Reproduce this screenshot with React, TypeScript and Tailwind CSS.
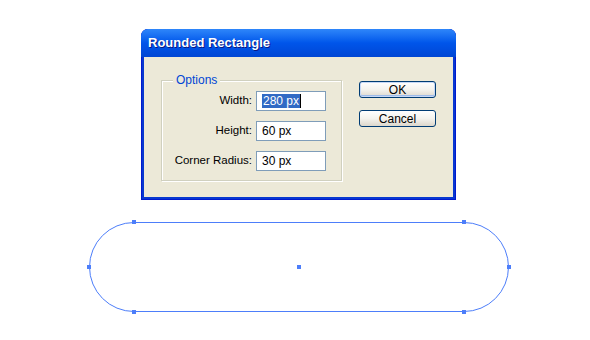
const font = "font-['Liberation_Sans',Arial,sans-serif]";

function Field({ label, value, selected }: { label: string; value: string; selected?: boolean }) {
  return (
    <div className="flex items-center justify-end gap-[4px] pr-[15px]">
      <span className="text-[11.5px] text-black">{label}</span>
      <div className="flex h-[20px] w-[70px] items-center border border-[#7F9DB9] bg-white pl-[5px] text-[12px] text-black">
        {selected ? (
          <>
            <span className="bg-[#316AC5] px-[1px] leading-[14px] text-white">{value}</span>
            <span className="h-[14px] w-[1px] bg-black" />
          </>
        ) : (
          <span>{value}</span>
        )}
      </div>
    </div>
  );
}

function XpButton({ label, isDefault }: { label: string; isDefault?: boolean }) {
  return (
    <button
      className={
        "flex h-[17px] w-[77px] items-center justify-center rounded-[3px] border border-[#003C74] bg-gradient-to-b from-white via-[#F4F3EE] to-[#DCD7CC] text-[12px] text-black " +
        (isDefault ? "shadow-[inset_0_0_0_1px_#C6D8F6,inset_0_-1px_0_1px_#9DBBEA]" : "")
      }
    >
      {label}
    </button>
  );
}

export default function App() {
  const pts: [number, number][] = [
    [134, 22],
    [464, 22],
    [509, 67],
    [464, 112],
    [134, 112],
    [89, 67],
    [299, 67],
  ];

  return (
    <div className={`h-[340px] w-[590px] overflow-hidden bg-white ${font}`}>
      {/* Dialog */}
      <div className="ml-[141px] mt-[29px] flex h-[171px] w-[315px] flex-col rounded-t-[7px] bg-[#0838D0] shadow-[inset_0_0_0_1px_#0019CF]">
        <div className="flex h-[28px] items-center rounded-t-[7px] bg-gradient-to-b from-[#2E86FA] via-[#0055EA] to-[#0046D4] pl-[7px]">
          <span className="text-[13px] font-bold text-white [text-shadow:1px_1px_0_#0A1883]">Rounded Rectangle</span>
        </div>
        <div className="mx-[3px] mb-[3px] flex flex-1 bg-[#ECE9D8] pl-[17px] pt-[23px]">
          {/* Options group */}
          <div className="relative h-[101px] w-[181px] border border-[#D0D0BF] pt-[10px] shadow-[inset_1px_1px_0_#fff,1px_1px_0_#fff]">
            <span className="absolute -top-[8px] left-[11px] bg-[#ECE9D8] px-[3px] text-[12px] leading-[14px] text-[#0046D5]">
              Options
            </span>
            <div className="flex flex-col gap-[10px]">
              <Field label="Width:" value="280 px" selected />
              <Field label="Height:" value="60 px" />
              <Field label="Corner Radius:" value="30 px" />
            </div>
          </div>
          {/* Buttons */}
          <div className="ml-[17px] mt-[1px] flex flex-col gap-[12px]">
            <XpButton label="OK" isDefault />
            <XpButton label="Cancel" />
          </div>
        </div>
      </div>

      {/* Rounded rectangle artwork */}
      <svg width="590" height="140" viewBox="0 0 590 140" className="block">
        <path
          d="M134 22.5 H464 A44.5 44.5 0 0 1 464 111.5 H134 A44.5 44.5 0 0 1 134 22.5 Z"
          fill="none"
          stroke="#4D7EFA"
          strokeWidth="1"
        />
        {pts.map(([x, y], i) => (
          <rect key={i} x={x - 2} y={y - 2} width="4" height="4" fill="#4D7EFA" />
        ))}
      </svg>
    </div>
  );
}
